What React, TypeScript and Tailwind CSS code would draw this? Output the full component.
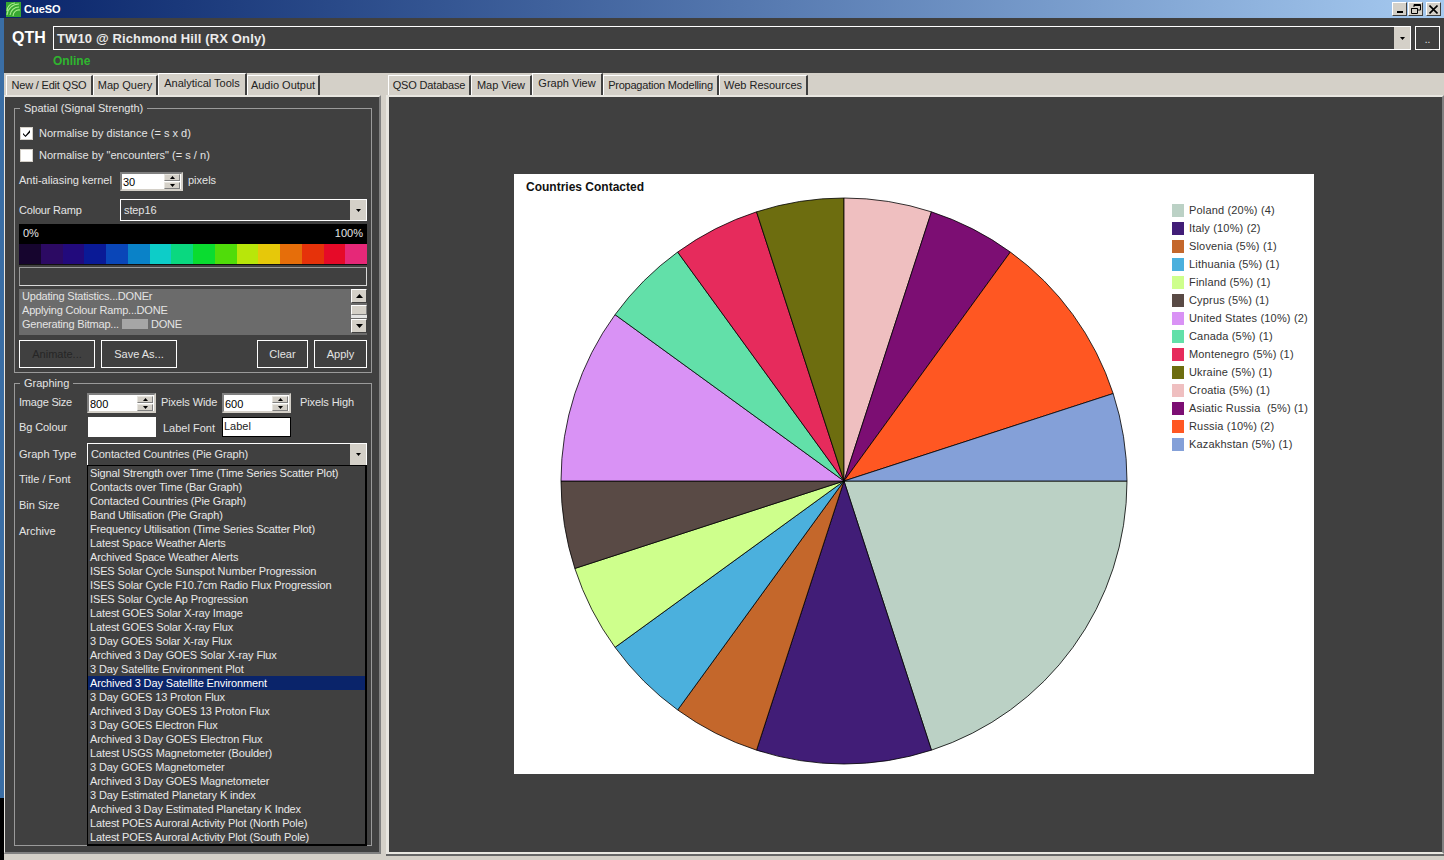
import { ReactNode } from "react";

const leftTabs = [
  { label: "New / Edit QSO", width: "w-[87px]", fit: "tracking-[-0.2px]" },
  { label: "Map Query", width: "w-[65px]" },
  { label: "Analytical Tools", width: "w-[89px]", active: true },
  { label: "Audio Output", width: "w-[73px]" },
];

const rightTabs = [
  { label: "QSO Database", width: "w-[83px]", fit: "tracking-[-0.17px]" },
  { label: "Map View", width: "w-[61px]" },
  { label: "Graph View", width: "w-[71px]", active: true },
  { label: "Propagation Modelling", width: "w-[116px]", fit: "tracking-[-0.23px]" },
  { label: "Web Resources", width: "w-[89px]" },
];

const ramp = [
  "#16052e", "#2c0a63", "#220a7c", "#0a1a96", "#0a46b8", "#0a82c8", "#0dcdc8", "#0ad880",
  "#0adc30", "#50dc0a", "#b8e60a", "#e6c80a", "#e66e0a", "#e6320a", "#e60a28", "#e62878",
];

const graphTypes = [
  "Signal Strength over Time (Time Series Scatter Plot)",
  "Contacts over Time (Bar Graph)",
  "Contacted Countries (Pie Graph)",
  "Band Utilisation (Pie Graph)",
  "Frequency Utilisation (Time Series Scatter Plot)",
  "Latest Space Weather Alerts",
  "Archived Space Weather Alerts",
  "ISES Solar Cycle Sunspot Number Progression",
  "ISES Solar Cycle F10.7cm Radio Flux Progression",
  "ISES Solar Cycle Ap Progression",
  "Latest GOES Solar X-ray Image",
  "Latest GOES Solar X-ray Flux",
  "3 Day GOES Solar X-ray Flux",
  "Archived 3 Day GOES Solar X-ray Flux",
  "3 Day Satellite Environment Plot",
  "Archived 3 Day Satellite Environment",
  "3 Day GOES 13 Proton Flux",
  "Archived 3 Day GOES 13 Proton Flux",
  "3 Day GOES Electron Flux",
  "Archived 3 Day GOES Electron Flux",
  "Latest USGS Magnetometer (Boulder)",
  "3 Day GOES Magnetometer",
  "Archived 3 Day GOES Magnetometer",
  "3 Day Estimated Planetary K index",
  "Archived 3 Day Estimated Planetary K Index",
  "Latest POES Auroral Activity Plot (North Pole)",
  "Latest POES Auroral Activity Plot (South Pole)",
];

const countries = [
  { name: "Poland (20%) (4)", share: 20, color: "#bbd1c5" },
  { name: "Italy (10%) (2)", share: 10, color: "#411d77" },
  { name: "Slovenia (5%) (1)", share: 5, color: "#c4672b" },
  { name: "Lithuania (5%) (1)", share: 5, color: "#4bb0dd" },
  { name: "Finland (5%) (1)", share: 5, color: "#ceff8c" },
  { name: "Cyprus (5%) (1)", share: 5, color: "#594a45" },
  { name: "United States (10%) (2)", share: 10, color: "#d992f5" },
  { name: "Canada (5%) (1)", share: 5, color: "#62e0a9" },
  { name: "Montenegro (5%) (1)", share: 5, color: "#e62b5c" },
  { name: "Ukraine (5%) (1)", share: 5, color: "#6d6d0f" },
  { name: "Croatia (5%) (1)", share: 5, color: "#efbfc0" },
  { name: "Asiatic Russia  (5%) (1)", share: 5, color: "#7c0e73" },
  { name: "Russia (10%) (2)", share: 10, color: "#ff5722" },
  { name: "Kazakhstan (5%) (1)", share: 5, color: "#84a0d8" },
];

function Caret({ up = false, big = false }: { up?: boolean; big?: boolean }) {
  return (
    <svg
      width={big ? 7 : 5}
      height={big ? 4 : 3}
      viewBox="0 0 7 4"
      preserveAspectRatio="none"
      className={up ? "rotate-180" : ""}
    >
      <path d="M0 0h7L3.5 4z" fill="#000" />
    </svg>
  );
}

function SelectBox({ value, className }: { value: string; className: string }) {
  return (
    <div className={`flex border border-white ${className}`}>
      <div className="flex flex-1 items-center pl-[3px] text-[11px] tracking-[-0.1px] text-[#e4e4e4]">{value}</div>
      <div className="flex w-[16px] items-center justify-center bg-[#d4d0c8]">
        <Caret />
      </div>
    </div>
  );
}

function Spin({ value, className }: { value: string; className: string }) {
  return (
    <div className={`flex items-center border-2 border-[#d4d0c8] border-l-[#808080] border-t-[#808080] bg-white pr-[1px] ${className}`}>
      <span className="flex-1 pl-[1px] pt-[2px] text-[11px] text-black">{value}</span>
      <div className="flex w-[16px] flex-col gap-[1px]">
        <div className="flex h-[7px] items-center justify-center border border-[#e8e6e0] border-b-[#808080] border-r-[#808080] bg-[#d4d0c8]">
          <Caret up />
        </div>
        <div className="flex h-[7px] items-center justify-center border border-[#e8e6e0] border-b-[#808080] border-r-[#808080] bg-[#d4d0c8]">
          <Caret />
        </div>
      </div>
    </div>
  );
}

function Check({ checked = false }: { checked?: boolean }) {
  return (
    <div className="flex h-[13px] w-[13px] items-center justify-center border border-[#d4d0c8] bg-white">
      {checked && (
        <svg width="9" height="9" viewBox="0 0 9 9">
          <path d="M1 4l2.5 2.5L8 1v2.5L3.5 8 1 5.5z" fill="#000" />
        </svg>
      )}
    </div>
  );
}

function Btn({ children, className, disabled = false }: { children: ReactNode; className: string; disabled?: boolean }) {
  return (
    <div
      className={`flex h-[28px] items-center justify-center border border-white text-[11px] ${
        disabled ? "text-[#262626]" : "text-[#e4e4e4]"
      } ${className}`}
    >
      {children}
    </div>
  );
}

function Tab({ label, width, active, fit = "" }: { label: string; width: string; active?: boolean; fit?: string }) {
  return (
    <div
      className={`flex items-center justify-center whitespace-nowrap border-l border-r-2 border-l-white border-r-[#404040] text-[11px] text-[#222] ${width} ${fit} ${
        active ? "h-[22px] border-t border-t-white pb-[3px]" : "h-[20px] border-t border-t-white"
      }`}
    >
      {label}
    </div>
  );
}

function Group({ title, className, children }: { title: string; className: string; children: ReactNode }) {
  return (
    <fieldset className={`ml-[9px] w-[358px] border border-[#9a9a9a] pl-[4px] ${className}`}>
      <legend className="ml-[1px] px-[4px] text-[11px] leading-[13px] text-[#e4e4e4]">{title}</legend>
      {children}
    </fieldset>
  );
}

function Pie() {
  let used = 0;
  const cx = 330;
  const cy = 307;
  const r = 283;
  return (
    <svg width="800" height="600" viewBox="0 0 800 600" className="absolute left-0 top-0">
      {countries.map((c) => {
        const a0 = (used / 100) * Math.PI * 2;
        used += c.share;
        const a1 = (used / 100) * Math.PI * 2;
        const d = `M${cx} ${cy}L${cx + r * Math.cos(a0)} ${cy + r * Math.sin(a0)}A${r} ${r} 0 0 1 ${cx + r * Math.cos(a1)} ${cy + r * Math.sin(a1)}Z`;
        return <path key={c.name} d={d} fill={c.color} stroke="#000" strokeWidth="0.8" />;
      })}
    </svg>
  );
}

export default function App() {
  return (
    <div
      className="flex h-[860px] w-[1444px] flex-col overflow-hidden bg-[#d4d0c8] text-[11px]"
      style={{ fontFamily: '"Liberation Sans", Arial, sans-serif' }}
    >
      {/* title bar */}
      <div className="flex h-[18px] items-center bg-gradient-to-r from-[#0a246a] to-[#a6caf0] pl-[6px] pr-[3px]">
        <svg width="15" height="15" viewBox="0 0 15 15">
          <rect width="15" height="15" fill="#37a832" />
          <path
            d="M1 9a8 8 0 0 1 8-8M1 13a12 12 0 0 1 12-11M4 13a9 9 0 0 1 9-8M7 14a6 6 0 0 1 7-6"
            fill="none"
            stroke="#a8ec8c"
            strokeWidth="1.1"
          />
        </svg>
        <span className="ml-[3px] flex-1 text-[11px] font-bold text-white">CueSO</span>
        <div className="flex items-center">
          <div className="flex h-[14px] w-[15px] items-end justify-center border border-[#fff] border-b-[#404040] border-r-[#404040] bg-[#d4d0c8] pb-[2px]">
            <div className="h-[2px] w-[6px] bg-black" />
          </div>
          <div className="ml-[1px] flex h-[14px] w-[15px] items-center justify-center border border-[#fff] border-b-[#404040] border-r-[#404040] bg-[#d4d0c8]">
            <svg width="10" height="10" viewBox="0 0 10 10" fill="none" stroke="#000">
              <path d="M3 3V.5h6.5V6H7M3 1.5h6.5" />
              <path d="M.5 4.5h6v5h-6zM.5 4.5h6" />
            </svg>
          </div>
          <div className="ml-[3px] flex h-[14px] w-[15px] items-center justify-center border border-[#fff] border-b-[#404040] border-r-[#404040] bg-[#d4d0c8]">
            <svg width="9" height="9" viewBox="0 0 9 9" fill="none" stroke="#000" strokeWidth="1.6">
              <path d="M.5.5l8 8M8.5.5l-8 8" />
            </svg>
          </div>
        </div>
      </div>

      <div className="flex flex-1">
        {/* desktop showing behind the window edge */}
        <div className="flex w-[4px] flex-col bg-black">
          <div className="h-[780px] bg-[#3a6ea5]" />
        </div>

        <div className="flex w-[1440px] flex-col">
          {/* QTH row */}
          <div className="flex h-[55px] flex-col bg-[#404040] pl-[8px] pr-[4px]">
            <div className="mt-[8px] flex h-[24px] items-center">
              <span className="w-[41px] text-[16px] font-bold leading-none text-white">QTH</span>
              <div className="flex h-[24px] w-[1358px] border border-white">
                <div className="flex flex-1 items-center pl-[3px] pt-[1px] text-[13px] font-bold tracking-[0.13px] text-[#ececec]">
                  TW10 @ Richmond Hill (RX Only)
                </div>
                <div className="flex w-[16px] items-center justify-center bg-[#d4d0c8]">
                  <Caret />
                </div>
              </div>
              <div className="ml-[4px] flex h-[24px] w-[25px] items-center justify-center border border-white pt-[3px] text-[10px] text-[#e4e4e4]">
                ..
              </div>
            </div>
            <div className="ml-[41px] mt-[3px] text-[12px] font-bold leading-[16px] text-[#2fb52f]">Online</div>
          </div>

          {/* tab strips */}
          <div className="flex h-[22px]">
            <div className="flex w-[384px] items-end pl-[2px]">
              {leftTabs.map((t) => (
                <Tab key={t.label} {...t} />
              ))}
            </div>
            <div className="flex flex-1 items-end">
              {rightTabs.map((t) => (
                <Tab key={t.label} {...t} />
              ))}
            </div>
          </div>

          {/* panels */}
          <div className="flex h-[760px]">
            {/* left panel */}
            <div className="h-[759px] w-[377px] border-2 border-l-[1px] border-[#e8e6e0] border-r-[#808080] border-b-[#808080] bg-[#404040]">
              <Group title="Spatial (Signal Strength)" className="mt-[5px] h-[271px]">
                <div className="mt-[11px] flex h-[14px] items-center pl-[1px] text-[#e4e4e4]">
                  <Check checked />
                  <span className="ml-[6px] tracking-[0.02px]">Normalise by distance (= s x d)</span>
                </div>
                <div className="mt-[8px] flex h-[14px] items-center pl-[1px] text-[#e4e4e4]">
                  <Check />
                  <span className="ml-[6px] tracking-[0.02px]">Normalise by "encounters" (= s / n)</span>
                </div>
                <div className="mt-[10px] flex h-[19px] items-center text-[#e4e4e4]">
                  <span className="mb-[2px] w-[101px]">Anti-aliasing kernel</span>
                  <Spin value="30" className="h-[19px] w-[63px]" />
                  <span className="mb-[2px] ml-[5px]">pixels</span>
                </div>
                <div className="mt-[8px] flex h-[22px] items-center text-[#e4e4e4]">
                  <span className="w-[101px] tracking-[-0.2px]">Colour Ramp</span>
                  <SelectBox value="step16" className="h-[22px] w-[247px]" />
                </div>
                <div className="mt-[3px] flex h-[20px] w-[348px] items-center justify-between bg-black px-[4px] pb-[2px] text-[11px] text-[#e4e4e4]">
                  <span>0%</span>
                  <span>100%</span>
                </div>
                <div className="flex h-[21px] w-[348px] border-b border-[#111]">
                  {ramp.map((c) => (
                    <div key={c} className="flex-1" style={{ backgroundColor: c }} />
                  ))}
                </div>
                <div className="mt-[2px] h-[19px] w-[348px] border border-[#d8d8d8] border-l-[#9a9a9a] border-t-[#9a9a9a]" />
                <div className="mt-[3px] flex h-[46px] w-[348px] bg-[#6b6b6b]">
                  <div className="flex-1 pl-[3px] text-[11px] leading-[14px] tracking-[-0.2px] text-[#e4e4e4]">
                    <div>Updating Statistics...DONEr</div>
                    <div>Applying Colour Ramp...DONE</div>
                    <div className="flex items-center">
                      Generating Bitmap...
                      <span className="mx-[3px] inline-block h-[10px] w-[26px] bg-[#a6a6a6]" />
                      DONE
                    </div>
                  </div>
                  <div className="flex w-[16px] flex-col">
                    <div className="flex h-[14px] items-center justify-center border border-white border-b-[#404040] border-r-[#404040] bg-[#d4d0c8]">
                      <Caret up big />
                    </div>
                    <div className="mt-[2px] h-[10px] border border-white border-b-[#808080] border-r-[#808080] bg-[#d4d0c8]" />
                    <div className="h-[3px] bg-[#e4e4e4]" />
                    <div className="mt-[1px] flex h-[14px] items-center justify-center border border-white border-b-[#404040] border-r-[#404040] bg-[#d4d0c8]">
                      <Caret big />
                    </div>
                  </div>
                </div>
                <div className="mt-[5px] flex w-[348px]">
                  <Btn disabled className="w-[76px]">Animate...</Btn>
                  <Btn className="ml-[6px] w-[76px]">Save As...</Btn>
                  <Btn className="ml-auto w-[51px]">Clear</Btn>
                  <Btn className="ml-[6px] w-[53px]">Apply</Btn>
                </div>
              </Group>

              <Group title="Graphing" className="mt-[4px] h-[469px]">
                <div className="relative">
                  <div className="mt-[3px] flex h-[20px] items-center text-[#e4e4e4]">
                    <span className="mb-[2px] w-[68px] tracking-[-0.2px]">Image Size</span>
                    <Spin value="800" className="h-[20px] w-[69px]" />
                    <span className="mb-[2px] ml-[5px] w-[61px] tracking-[-0.1px]">Pixels Wide</span>
                    <Spin value="600" className="h-[20px] w-[69px]" />
                    <span className="mb-[2px] ml-[9px] tracking-[-0.1px]">Pixels High</span>
                  </div>
                  <div className="mt-[4px] flex h-[20px] items-center text-[#e4e4e4]">
                    <span className="w-[69px] tracking-[-0.1px]">Bg Colour</span>
                    <div className="h-[20px] w-[68px] bg-white" />
                    <span className="ml-[7px] mt-[2px] w-[59px]">Label Font</span>
                    <div className="flex h-[20px] w-[69px] items-center border border-black bg-white pb-[2px] pl-[1px] text-[11px] text-[#222]">
                      Label
                    </div>
                  </div>
                  <div className="mt-[6px] flex h-[23px] items-center text-[#e4e4e4]">
                    <span className="w-[68px]">Graph Type</span>
                    <SelectBox value="Contacted Countries (Pie Graph)" className="h-[23px] w-[280px]" />
                  </div>
                  <div className="mt-[7px] flex flex-col gap-[13px] text-[#e4e4e4]">
                    <span className="leading-[13px]">Title / Font</span>
                    <span className="leading-[13px]">Bin Size</span>
                    <span className="leading-[13px]">Archive</span>
                  </div>
                  {/* open dropdown */}
                  <div className="absolute left-[68px] top-[72px] w-[280px] border border-b-2 border-r-2 border-black bg-[#404040] text-[11px] leading-[14px] tracking-[-0.13px] text-[#e8e8e8]">
                    {graphTypes.map((g) => (
                      <div
                        key={g}
                        className={
                          g === "Archived 3 Day Satellite Environment"
                            ? "h-[14px] bg-[#0a246a] pl-[2px] text-white"
                            : "h-[14px] pl-[2px]"
                        }
                      >
                        {g}
                      </div>
                    ))}
                  </div>
                </div>
              </Group>
            </div>

            {/* right panel */}
            <div className="ml-[5px] flex h-[759px] w-[1058px] flex-col border-2 border-l-[3px] border-[#e8e6e0] border-r-[#808080] bg-[#404040] pl-[125px] pt-[77px] shadow-[0_2px_0_#666666]">
              <div className="relative flex h-[600px] w-[800px] justify-between bg-white pl-[12px] pt-[6px]">
                <Pie />
                <div className="relative text-[12px] font-bold leading-[14px] text-[#111]">Countries Contacted</div>
                <div className="absolute left-[658px] top-[27px] flex flex-col">
                  {countries.map((c) => (
                    <div key={c.name} className="flex h-[18px] items-center">
                      <div className="h-[13px] w-[12px]" style={{ backgroundColor: c.color }} />
                      <span className="ml-[5px] whitespace-pre text-[11px] tracking-[0.17px] text-[#333]">{c.name}</span>
                    </div>
                  ))}
                </div>
              </div>
            </div>
          </div>
        </div>
      </div>
    </div>
  );
}
